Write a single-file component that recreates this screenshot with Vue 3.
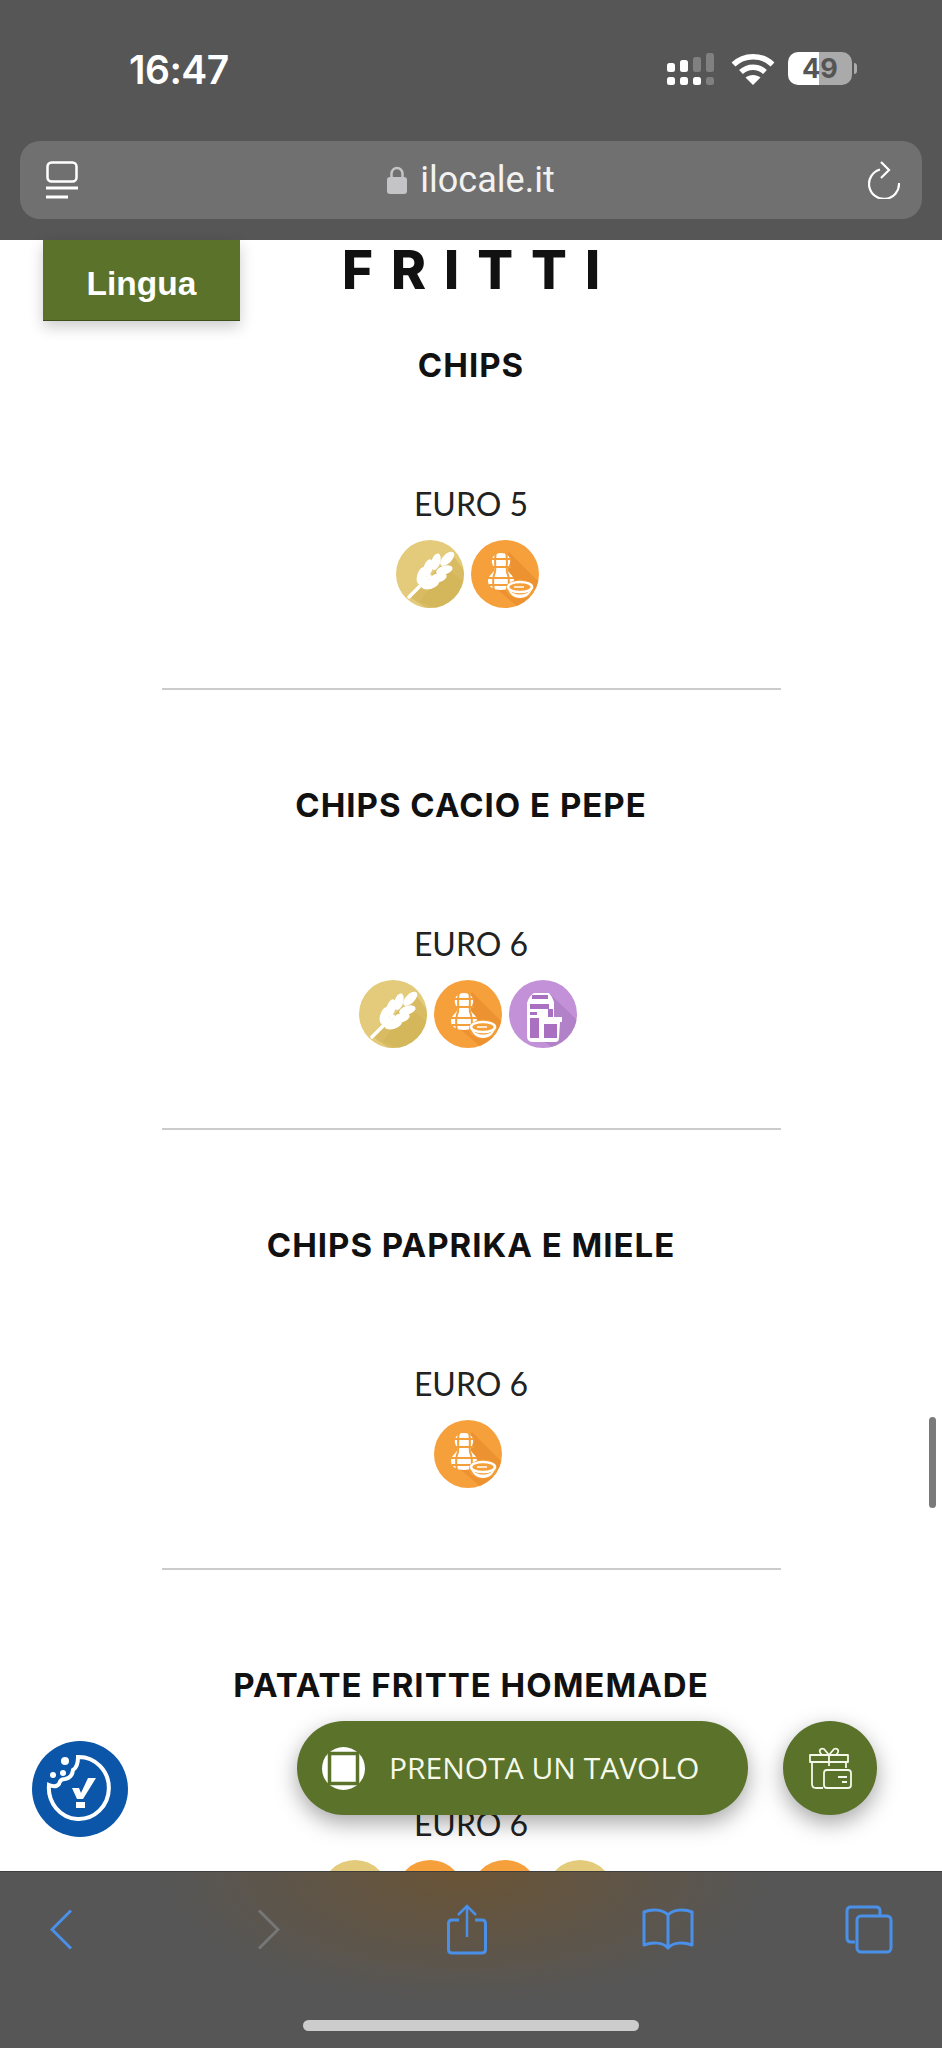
<template>
  <div class="phone">
    <header class="topbar">
      <div class="status">
        <span class="time">16:47</span>
        <div class="status-icons">
          <svg class="signal" width="48" height="33" viewBox="0 0 48 33">
            <g fill="#fff">
              <rect x="0" y="11" width="8" height="9" rx="2.5" />
              <rect x="13" y="8" width="8" height="12" rx="2.5" />
              <rect x="0" y="25" width="8" height="8" rx="2.5" />
              <rect x="13" y="25" width="8" height="8" rx="2.5" />
              <rect x="26" y="25" width="8" height="8" rx="2.5" />
            </g>
            <g fill="#808080">
              <rect x="26" y="5" width="8" height="15" rx="2.5" />
              <rect x="39" y="1" width="8" height="19" rx="2.5" />
              <rect x="39" y="25" width="8" height="8" rx="2.5" />
            </g>
          </svg>
          <svg class="wifi" width="44" height="32" viewBox="0 0 44 32">
            <g fill="none" stroke="#fff" stroke-width="5.5">
              <path d="M2.5 11.5C13 1 31 1 41.5 11.5" />
              <path d="M10 19c7-6.500 17-6.500 24 0" />
            </g>
            <path d="M14.500 24.500c4-3.500 11-3.500 15 0L22 32z" fill="#fff" />
          </svg>
          <div class="battery">
            <span class="battery-level">49</span>
          </div>
        </div>
      </div>
      <div class="urlbar">
        <svg width="32" height="38" viewBox="0 0 32 38">
          <g fill="none" stroke="#fff">
            <rect x="1.500" y="1.500" width="29" height="19" rx="4" stroke-width="2.500" />
            <path d="M0 27h32M0 36h22" stroke-width="3" />
          </g>
        </svg>
        <div class="address">
          <svg width="20" height="28" viewBox="0 0 20 28">
            <path d="M4.500 13V7.500a5.500 5.500 0 0 1 11 0V13" fill="none" stroke="#c4c4c6" stroke-width="2.500" />
            <rect x="0" y="11" width="20" height="17" rx="3" fill="#c4c4c6" />
          </svg>
          <span>ilocale.it</span>
        </div>
        <svg width="32" height="38" viewBox="0 0 32 38">
          <path d="M12 8.500A15 15 0 1 0 31 22" fill="none" stroke="#fff" stroke-width="2.200" />
          <path d="M13 1l8 8-8 8" fill="none" stroke="#fff" stroke-width="2.200" />
        </svg>
      </div>
    </header>

    <main class="page">
      <h1 class="category">FRITTI</h1>
      <section v-for="dish in dishes" :key="dish.name" class="dish">
        <h2 class="dish-name">{{ dish.name }}</h2>
        <p class="dish-price">{{ dish.price }}</p>
        <div class="allergens">
          <div v-for="(icon, i) in dish.icons" :key="i" class="badge" :class="icon">
            <svg v-if="icon === 'wheat'" width="68" height="68" viewBox="0 0 68 68">
              <path d="M14 57L56 14L68 30V68H30Z" fill="#cfae4f" opacity=".55" />
              <path d="M24 62L48 26L68 42V68H40Z" fill="#cfae4f" opacity=".35" />
              <path d="M13 57L34 36" stroke="#fff" stroke-width="3.500" stroke-linecap="round" />
              <g fill="#fff" transform="translate(13 57) rotate(-45)">
                <ellipse cx="54" cy="0" rx="9" ry="4.500" />
                <ellipse cx="24" cy="-6" rx="9" ry="4.600" transform="rotate(-28 24 -6)" />
                <ellipse cx="24" cy="6" rx="9" ry="4.600" transform="rotate(28 24 6)" />
                <ellipse cx="34" cy="-7" rx="9" ry="4.600" transform="rotate(-28 34 -7)" />
                <ellipse cx="34" cy="7" rx="9" ry="4.600" transform="rotate(28 34 7)" />
                <ellipse cx="44" cy="-6" rx="8.500" ry="4.400" transform="rotate(-28 44 -6)" />
                <ellipse cx="44" cy="6" rx="8.500" ry="4.400" transform="rotate(28 44 6)" />
              </g>
            </svg>
            <svg v-else-if="icon === 'peanut'" width="68" height="68" viewBox="0 0 68 68">
              <path d="M38 12L68 42V68H48L20 44Z" fill="#e98d2d" opacity=".75" />
              <path d="M30 13c7 0 10 5 9 10-1 4-3 5-2 8 2 3 6 5 6 10 0 6-6 9-13 9s-13-3-13-9c0-5 4-7 6-10 1-3-1-4-2-8-1-5 2-10 9-10z" fill="#fff" />
              <g stroke="#f59f3a" stroke-width="2" fill="none">
                <path d="M20 19h20M20 27h20M17 38h26M18 45h24" />
                <path d="M25 12c-2 8 0 14-1 20-3 6-2 13-1 19M35 12c2 8 0 14 1 20 3 6 2 13 1 19" />
              </g>
              <ellipse cx="49" cy="49" rx="14" ry="9.500" fill="#f59f3a" />
              <ellipse cx="49" cy="47" rx="12" ry="5" fill="none" stroke="#fff" stroke-width="2.500" />
              <path d="M37 48c1 6 6 10 12 10s11-4 12-10c-2 4-6 6.500-12 6.500s-10-2.500-12-6.500z" fill="#fff" />
              <path d="M43 47h10" stroke="#fff" stroke-width="1.500" />
            </svg>
            <svg v-else width="68" height="68" viewBox="0 0 68 68">
              <path d="M40 13L68 40V68H44L18 50Z" fill="#ab7cc2" opacity=".7" />
              <path d="M25 13h15q3 3 5 9v15h8v5h-2l-1 16q0 4-4 4H24q-6 0-6-6V23q2-7 7-10z" fill="#fff" />
              <g fill="#a970c2">
                <rect x="23" y="15" width="16" height="4" />
                <rect x="21" y="24" width="19" height="5" />
                <rect x="21" y="32" width="7" height="3" />
                <rect x="39" y="29" width="5" height="8" />
                <rect x="21" y="38" width="9" height="20" />
                <rect x="35" y="44" width="13" height="14" />
              </g>
            </svg>
          </div>
        </div>
        <hr class="divider" />
      </section>

      <button class="lingua">Lingua</button>
      <div class="scroll-thumb"></div>

      <button class="cookie" aria-label="Cookie">
        <svg width="96" height="96" viewBox="0 0 96 96">
          <path d="M46 16A30 31 0 1 1 17 44Q24 47 27 43Q28 38 33 38Q40 37 41 29Q46 26 46 16Z" fill="none" stroke="#fff" stroke-width="4" />
          <circle cx="33" cy="20" r="4" fill="#fff" />
          <circle cx="31" cy="32" r="3" fill="#fff" />
          <circle cx="21" cy="34" r="3" fill="#fff" />
          <path d="M40 47h7l2 5 7-15h8L51 58h-6z" fill="#fff" />
          <rect x="44" y="61" width="9" height="6" fill="#fff" />
        </svg>
      </button>

      <button class="book">
        <svg width="43" height="43" viewBox="0 0 43 43">
          <circle cx="21.500" cy="21.500" r="21.500" fill="#fff" />
          <rect x="7.500" y="6.500" width="28" height="30" fill="#fff" stroke="#5a7229" stroke-width="3.500" />
        </svg>
        <span>PRENOTA UN TAVOLO</span>
      </button>

      <button class="gift" aria-label="Gift">
        <svg width="44" height="44" viewBox="0 0 44 44">
          <g fill="none" stroke="#f4f8e8" stroke-width="1.800" stroke-linejoin="round">
            <path d="M2 9h38v7H2zM4 16v22q0 4 4 4h7M38 16v6M21 9v11" />
            <path d="M21 9l-5-6q-3-1-4 1t2 5zM21 9l5-6q3-1 4 1t-2 5z" />
            <rect x="16" y="24" width="27" height="18" rx="3" />
            <path d="M30 31h9M34 36h5" />
          </g>
        </svg>
      </button>
    </main>

    <footer class="toolbar">
      <div class="tools">
        <svg width="23" height="41" viewBox="0 0 23 41">
          <path d="M21 1.500L2 20.500l19 19" fill="none" stroke="#4a90e8" stroke-width="3" />
        </svg>
        <svg class="forward" width="23" height="41" viewBox="0 0 23 41">
          <path d="M2 1.500l19 19-19 19" fill="none" stroke="#777" stroke-width="3" />
        </svg>
        <svg class="share" width="40" height="51" viewBox="0 0 40 51">
          <path d="M12 16H5q-3.500 0-3.500 3.500v26q0 3.500 3.500 3.500h30q3.500 0 3.500-3.500v-26Q38.500 16 35 16h-7" fill="none" stroke="#4a90e8" stroke-width="3" />
          <path d="M20 33V2M11 11l9-9 9 9" fill="none" stroke="#4a90e8" stroke-width="2.500" />
        </svg>
        <svg class="bookmarks" width="52" height="42" viewBox="0 0 52 42">
          <path d="M26 7C21 1 9 1 2 4v33c8-3 19-3 24 3 5-6 16-6 24-3V4C43 1 31 1 26 7zM26 7v33" fill="none" stroke="#4a90e8" stroke-width="3" stroke-linejoin="round" />
        </svg>
        <svg width="48" height="49" viewBox="0 0 48 49">
          <path d="M10 37H6q-4 0-4-4V6q0-4 4-4h25q4 0 4 4v4" fill="none" stroke="#4a90e8" stroke-width="3" />
          <rect x="12" y="11" width="34" height="36" rx="4" fill="none" stroke="#4a90e8" stroke-width="3" />
        </svg>
      </div>
      <div class="home-bar"></div>
    </footer>
  </div>
</template>

<script setup>
const dishes = [
  { name: 'CHIPS', price: 'EURO 5', icons: ['wheat', 'peanut'] },
  { name: 'CHIPS CACIO E PEPE', price: 'EURO 6', icons: ['wheat', 'peanut', 'milk'] },
  { name: 'CHIPS PAPRIKA E MIELE', price: 'EURO 6', icons: ['peanut'] },
  { name: 'PATATE FRITTE HOMEMADE', price: 'EURO 6', icons: ['wheat', 'peanut', 'peanut', 'wheat'] }
]
</script>

<style scoped>
.phone {
  width: 942px;
  height: 2048px;
  display: flex;
  flex-direction: column;
  background: #fff;
  overflow: hidden;
}

.topbar {
  height: 240px;
  flex: none;
  background: #565656;
  padding: 0 20px;
  box-sizing: border-box;
}
.status {
  height: 141px;
  display: flex;
  justify-content: space-between;
  padding: 48px 70px 0 109px;
  box-sizing: border-box;
}
.time {
  font: 600 39px/44px Inter, sans-serif;
  color: #fff;
  letter-spacing: -0.5px;
}
.status-icons {
  display: flex;
  gap: 13px;
  height: 34px;
  margin-top: 4px;
}
.signal {
  margin-right: 3px;
}
.wifi {
  margin-top: 1px;
}
.battery {
  width: 64px;
  height: 33px;
  border-radius: 10px;
  background: linear-gradient(90deg, #fff 48%, #aaa 48%);
  position: relative;
  text-align: center;
  font: 700 27px/33px Inter, sans-serif;
  color: #555;
}
.battery::after {
  content: '';
  position: absolute;
  left: 66px;
  top: 11px;
  width: 3px;
  height: 11px;
  background: #aaa;
  border-radius: 0 3px 3px 0;
}
.urlbar {
  height: 78px;
  border-radius: 20px;
  background: #707070;
  display: flex;
  align-items: center;
  justify-content: space-between;
  padding: 0 22px 0 26px;
  box-sizing: border-box;
}
.address {
  display: flex;
  align-items: center;
  gap: 13px;
  margin-right: 4px;
  font: 400 36px/44px Roboto, sans-serif;
  color: #f2f2f2;
}

.page {
  flex: 1;
  position: relative;
  min-height: 0;
}
.category {
  margin: 0 0 45px;
  height: 60px;
  text-align: center;
  font: 800 53px/60px Inter, sans-serif;
  letter-spacing: 18px;
  color: #111;
  padding-left: 18px;
}
.dish {
  text-align: center;
}
.dish + .dish {
  margin-top: 95px;
}
.dish-name {
  margin: 0;
  font: 700 33px/40px Inter, sans-serif;
  letter-spacing: 1px;
  color: #111;
}
.dish-price {
  margin: 99px 0 16px;
  font: 400 32px/40px Lato, sans-serif;
  color: #222;
}
.allergens {
  display: flex;
  justify-content: center;
  height: 68px;
}
.badge {
  width: 68px;
  height: 68px;
  flex: none;
  margin-right: 7px;
  border-radius: 50%;
  overflow: hidden;
}
.wheat {
  background: #e3cb7b;
}
.peanut {
  background: #f6a03b;
}
.milk {
  background: #c391d8;
}
.divider {
  width: 619px;
  height: 2px;
  margin: 80px auto 0;
  border: 0;
  background: #ccc;
}

button {
  border: 0;
  padding: 0;
  cursor: pointer;
}
.lingua {
  position: absolute;
  left: 43px;
  top: 0;
  width: 197px;
  height: 81px;
  background: #5a7229;
  border-bottom: 1px solid #3d4f1a;
  padding-top: 8px;
  font: 700 33.5px/40px "Liberation Sans", sans-serif;
  color: #fff;
  box-shadow: 0 6px 14px rgba(0, 0, 0, 0.2);
}
.scroll-thumb {
  position: absolute;
  left: 929px;
  top: 1177px;
  width: 7px;
  height: 91px;
  border-radius: 4px;
  background: #7a7a7a;
}
.cookie {
  position: absolute;
  left: 32px;
  top: 1501px;
  width: 96px;
  height: 96px;
  border-radius: 50%;
  background: #0b56a8;
}
.cookie svg {
  display: block;
}
.book {
  position: absolute;
  left: 297px;
  top: 1481px;
  width: 451px;
  height: 94px;
  border-radius: 47px;
  background: #5a7229;
  box-shadow: 0 8px 22px rgba(0, 0, 0, 0.35);
  display: flex;
  align-items: center;
  gap: 24px;
  padding-left: 25px;
  box-sizing: border-box;
  font: 400 30px/40px "Open Sans", sans-serif;
  color: #f6f9ea;
}
.gift {
  position: absolute;
  left: 783px;
  top: 1481px;
  width: 94px;
  height: 94px;
  border-radius: 50%;
  background: #5a7229;
  box-shadow: 0 8px 22px rgba(0, 0, 0, 0.35);
  display: flex;
  align-items: center;
  justify-content: center;
}

.toolbar {
  height: 177px;
  flex: none;
  background: radial-gradient(ellipse 300px 130px at 465px 0, #6a5436, rgba(106, 84, 54, 0)) #565656;
  border-top: 1px solid #3f3f3f;
  box-sizing: border-box;
  position: relative;
}
.tools {
  display: grid;
  grid-template-columns: repeat(5, 202px);
  justify-items: center;
  align-items: center;
  margin-left: -40px;
  padding-top: 30px;
  height: 54px;
}
.forward {
  margin-left: 10px;
}
.share {
  margin-left: 4px;
}
.bookmarks {
  margin-left: 2px;
}
.home-bar {
  position: absolute;
  left: 303px;
  top: 148px;
  width: 336px;
  height: 11px;
  border-radius: 6px;
  background: #ccc;
}
</style>
